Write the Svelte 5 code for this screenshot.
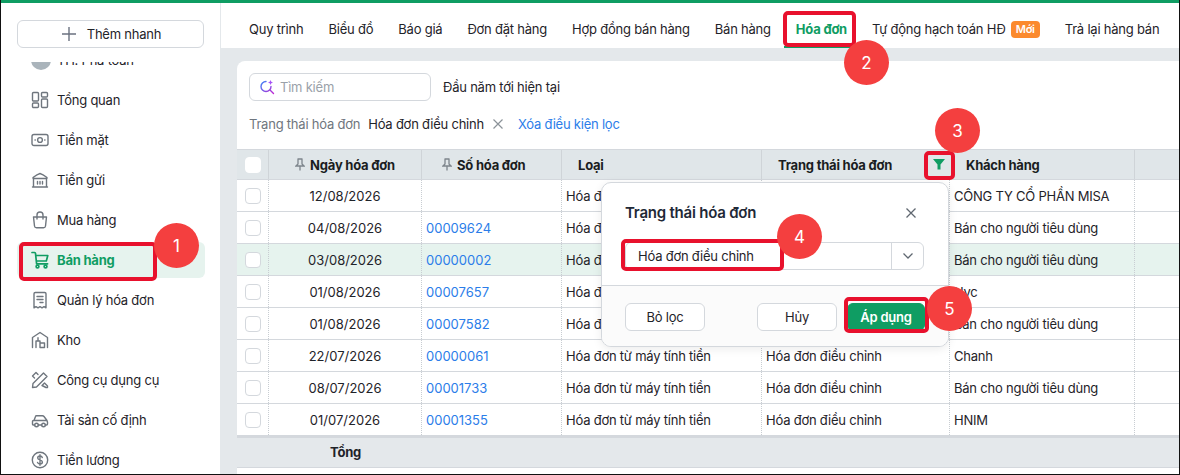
<script>
  const tabs = ['Quy trình', 'Biểu đồ', 'Báo giá', 'Đơn đặt hàng', 'Hợp đồng bán hàng', 'Bán hàng'];
  const nav = [
    { label: 'Tổng quan', icon: 'grid' },
    { label: 'Tiền mặt', icon: 'cash' },
    { label: 'Tiền gửi', icon: 'bank' },
    { label: 'Mua hàng', icon: 'bag' },
    { label: 'Bán hàng', icon: 'cart', active: true },
    { label: 'Quản lý hóa đơn', icon: 'receipt' },
    { label: 'Kho', icon: 'store' },
    { label: 'Công cụ dụng cụ', icon: 'tools' },
    { label: 'Tài sản cố định', icon: 'car' },
    { label: 'Tiền lương', icon: 'dollar' }
  ];
  const kind = 'Hóa đơn từ máy tính tiền';
  const st = 'Hóa đơn điều chỉnh';
  const rows = [
    { d: '12/08/2026', n: '', c: 'CÔNG TY CỔ PHẦN MISA' },
    { d: '04/08/2026', n: '00009624', c: 'Bán cho người tiêu dùng' },
    { d: '03/08/2026', n: '00000002', c: 'Bán cho người tiêu dùng', hl: true },
    { d: '01/08/2026', n: '00007657', c: 'Hvc' },
    { d: '01/08/2026', n: '00007582', c: 'Bán cho người tiêu dùng' },
    { d: '22/07/2026', n: '00000061', c: 'Chanh' },
    { d: '08/07/2026', n: '00001733', c: 'Bán cho người tiêu dùng' },
    { d: '01/07/2026', n: '00001355', c: 'HNIM' }
  ];
</script>

{#snippet pin()}
  <svg class="pin" width="10" height="13" viewBox="0 0 10 13" fill="none" stroke="#7d858c" stroke-width="1.3">
    <path d="M2.5 1h5M3 1v5L1 8h8L7 6V1M5 8v4.5" />
  </svg>
{/snippet}

{#snippet navIcon(name)}
  <svg class="nav-icon" width="18" height="18" viewBox="0 0 18 18" fill="none" stroke="currentColor" stroke-width="1.4" stroke-linejoin="round" stroke-linecap="round">
    {#if name === 'grid'}
      <rect x="1.500" y="1.500" width="6" height="8.500" rx="1" /><rect x="10.500" y="1.500" width="6" height="4.500" rx="1" /><rect x="1.500" y="12" width="6" height="4.500" rx="1" /><rect x="10.500" y="8" width="6" height="8.500" rx="1" />
    {:else if name === 'cash'}
      <rect x="1" y="3.500" width="16" height="11" rx="2" /><circle cx="9" cy="9" r="2.400" /><path d="M4 9h.3M13.700 9h.3" />
    {:else if name === 'bank'}
      <path d="M2 6.500C5 4.200 7 3 9 2.500c2 .5 4 1.700 7 4M2 7.500h14M2.500 8v7.500M15.500 8v7.500M1.500 16h15M6.500 10.500v2.500M9 10.500v2.500M11.500 10.500v2.500" />
    {:else if name === 'bag'}
      <path d="M2.500 6h13l-1 9a2 2 0 0 1-2 1.800h-7a2 2 0 0 1-2-1.800zM6 8V4a3 3 0 0 1 6 0v4" />
    {:else if name === 'cart'}
      <path d="M1 1.500h2.500a1 1 0 0 1 1 .9L5.600 12.800h11M4.800 4.500h12l-1.500 5.500H5.300" stroke-width="1.700" /><circle cx="6.500" cy="15.500" r="1.400" stroke-width="1.700" /><circle cx="14.500" cy="15.500" r="1.400" stroke-width="1.700" />
    {:else if name === 'receipt'}
      <path d="M3 2.800a1.300 1.300 0 0 1 1.300-1.300h9.400A1.300 1.300 0 0 1 15 2.800v14l-2-1.200-2 1.200-2-1.200-2 1.200-2-1.200-2 1.200zM6 5.500h6M6 8.500h6M9 11.500h3" />
    {:else if name === 'store'}
      <path d="M1.500 16.500V6.500L9 1.500l7.500 5v10M5 16.500v-6.500h4v6.500M9 16.500h4.500v-4.500H9M7 6.800v3" />
    {:else if name === 'tools'}
      <path d="M3.500 7 1.500 5 5 1.500 7 3.500M11 14.500l2.500-2.500 3 3v1.500H15zM12.500 2 16 5.500 5.500 16l-4 .5.500-4z" />
    {:else if name === 'car'}
      <path d="M3.700 14H2.500a1 1 0 0 1-1-1v-2.500a1 1 0 0 1 1-1h12.500a1.500 1.500 0 0 1 1.500 1.500v2a1 1 0 0 1-1 1h-1.200M7.300 14h3.400M3 9.500l1.500-4a1 1 0 0 1 1-.7h6a2 2 0 0 1 1.500.7l3 4" /><circle cx="5.500" cy="14" r="1.800" /><circle cx="12.500" cy="14" r="1.800" />
    {:else if name === 'dollar'}
      <circle cx="9" cy="9" r="7.700" /><path d="M11.300 6.500C11 5.500 10 5 9 5c-1.300 0-2.300.8-2.300 1.900 0 2.600 4.700 1.400 4.700 4.100 0 1.100-1 2-2.400 2-1.200 0-2.200-.6-2.500-1.600M9 3.800v10.400" />
    {/if}
  </svg>
{/snippet}

<div class="frame">
  <div class="topline"></div>
  <div class="shell">
    <aside class="sidebar">
      <button class="quick">
        <svg width="14" height="14" viewBox="0 0 14 14" stroke="#6b7280" stroke-width="1.400"><path d="M7 0v14M0 7h14" /></svg>
        Thêm nhanh
      </button>
      <div class="navclip">
        <div class="navscroll">
          <div class="item">
            <svg class="nav-icon avatar" width="20" height="20" viewBox="0 0 20 20"><circle cx="10" cy="10" r="10" fill="#aab4bb" /></svg>
            <span>TH. Phá toán</span>
          </div>
          {#each nav as n}
            <div class="item" class:active={n.active}>
              {@render navIcon(n.icon)}
              <span>{n.label}</span>
            </div>
          {/each}
        </div>
      </div>
    </aside>

    <main class="main">
      <nav class="tabs">
        {#each tabs as t}<span class="tab">{t}</span>{/each}
        <span class="tab current">Hóa đơn</span>
        <span class="tab withbadge">Tự động hạch toán HĐ <b class="badge">Mới</b></span>
        <span class="tab">Trả lại hàng bán</span>
        <span class="tab">Chứng từ</span>
      </nav>
      <section class="content">
        <div class="card">
          <div class="toolbar">
            <div class="search">
              <svg width="16" height="16" viewBox="0 0 16 16" fill="none" stroke-width="1.400" stroke-linecap="round">
                <defs><linearGradient id="sg" x1="0" y1="0" x2="1" y2="1"><stop offset="0" stop-color="#3b82f6" /><stop offset="1" stop-color="#c026d3" /></linearGradient></defs>
                <path d="M7 2.500a5 5 0 1 0 5 5M11 11l3.500 3.500" stroke="url(#sg)" />
                <path d="M11.500 1l.8 1.700 1.700.8-1.700.8-.8 1.700-.8-1.700L9 3.500l1.700-.8z" fill="#a855f7" />
              </svg>
              <span>Tìm kiếm</span>
            </div>
            <span class="period">Đầu năm tới hiện tại</span>
          </div>
          <div class="filters">
            <span class="flabel">Trạng thái hóa đơn</span>
            <span class="fvalue">Hóa đơn điều chỉnh</span>
            <svg class="fx" width="10" height="10" viewBox="0 0 10 10" stroke="#8b9299" stroke-width="1.200"><path d="M.5.500l9 9M9.500.500l-9 9" /></svg>
            <span class="fclear">Xóa điều kiện lọc</span>
          </div>
          <div class="table">
            <div class="row head">
              <div class="cell chk"><i class="box white"></i></div>
              <div class="cell date">{@render pin()}Ngày hóa đơn</div>
              <div class="cell num">{@render pin()}Số hóa đơn</div>
              <div class="cell kind">Loại</div>
              <div class="cell state">Trạng thái hóa đơn
                <svg class="funnel" width="12" height="12" viewBox="0 0 12 12"><path d="M0 1h12L7.500 6.500V11.500h-3V6.500z" fill="#0f9d63" /></svg>
              </div>
              <div class="cell cust">Khách hàng</div>
              <div class="cell rest"></div>
            </div>
            {#each rows as r}
              <div class="row" class:hl={r.hl}>
                <div class="cell chk"><i class="box"></i></div>
                <div class="cell date">{r.d}</div>
                <div class="cell num">{r.n}</div>
                <div class="cell kind">{kind}</div>
                <div class="cell state">{st}</div>
                <div class="cell cust">{r.c}</div>
                <div class="cell rest"></div>
              </div>
            {/each}
            <div class="total"><span>Tổng</span></div>
          </div>
        </div>
      </section>
    </main>
  </div>

  <div class="popup">
    <div class="popbody">
      <div class="poptitle">
        <span>Trạng thái hóa đơn</span>
        <svg width="10" height="10" viewBox="0 0 10 10" stroke="#5f6770" stroke-width="1.300"><path d="M.5.500l9 9M9.500.500l-9 9" /></svg>
      </div>
      <div class="select">
        <span>Hóa đơn điều chỉnh</span>
        <div class="caret"><svg width="10" height="6" viewBox="0 0 10 6" fill="none" stroke="#5f6770" stroke-width="1.300"><path d="M.5.500 5 5 9.500.500" /></svg></div>
      </div>
    </div>
    <div class="popfoot">
      <button class="btn">Bỏ lọc</button>
      <span class="spacer"></span>
      <button class="btn">Hủy</button>
      <button class="btn primary">Áp dụng</button>
    </div>
  </div>

  <i class="mark m1"></i><i class="mark m2"></i><i class="mark m3"></i><i class="mark m4"></i><i class="mark m5"></i>
  <b class="dot d1">1</b><b class="dot d2">2</b><b class="dot d3">3</b><b class="dot d4">4</b><b class="dot d5">5</b>
</div>

<style>
  :global(body) { margin: 0; background: #fff; }
  * { box-sizing: border-box; }
  .frame {
    position: relative; width: 1180px; height: 475px; overflow: hidden;
    border-left: 1px solid #111; border-right: 1px solid #111; border-bottom: 1px solid #111;
    font: 13px/18px Inter, "Noto Sans", sans-serif; letter-spacing: -0.22px; color: #1f2329; background: #fff;
  }
  .topline { height: 3px; background: #0f9d63; }
  .shell { display: flex; height: 471px; }

  .sidebar { width: 220px; flex: none; border-right: 1px solid #e4e8eb; padding: 17px 15px 0 16px; background: #fff; }
  .quick {
    display: flex; align-items: center; justify-content: center; gap: 11px; width: 187px; height: 28px;
    background: #fff; border: 1px solid #d4d8dd; border-radius: 6px; font: inherit; letter-spacing: inherit; color: #1f2329; padding: 0 0 0 2px;
  }
  .navclip { height: 412px; margin-top: 14px; overflow: hidden; }
  .navscroll { margin-top: -20px; }
  .item { display: flex; align-items: center; gap: 8px; height: 36px; margin-bottom: 4px; padding-left: 14px; border-radius: 6px; width: 188px; color: #1f2329; }
  .nav-icon { flex: none; color: #6f767e; }
  .avatar { margin-right: -2px; }
  .item.active { background: #e6f3ee; color: #0f9d63; font-weight: 700; }
  .item.active .nav-icon { color: #0f9d63; }

  .main { flex: 1; min-width: 0; display: flex; flex-direction: column; }
  .tabs { height: 45px; display: flex; align-items: center; padding: 7px 0 0 28px; gap: 25px; white-space: nowrap; overflow: hidden; flex: none; }
  .tab { position: relative; color: #1f2329; flex: none; }
  .tab.current { color: #0f9d63; font-weight: 700; }
  .tab.current::after { content: ''; position: absolute; left: -12px; right: -12px; bottom: -10px; height: 2px; background: #0f9d63; }
  .withbadge { display: inline-flex; align-items: center; gap: 5px; }
  .badge { background: #fb8a2e; color: #fff; font-size: 11px; line-height: 17px; font-weight: 600; padding: 0 5px; border-radius: 4px; }

  .content { flex: 1; background: #e4e8eb; padding: 13px 0 0 16px; }
  .card { background: #fff; border-radius: 8px 0 0 0; height: 413px; }
  .toolbar { display: flex; align-items: center; gap: 12px; padding: 12px 12px 0; }
  .search { display: flex; align-items: center; gap: 5px; width: 182px; height: 28px; border: 1px solid #d4d8dd; border-radius: 6px; padding-left: 9px; color: #9aa1a9; }
  .period { color: #1f2329; }
  .filters { display: flex; align-items: center; height: 18px; margin: 14px 12px 16px; }
  .flabel { color: #6f767e; margin-right: 8px; }
  .fx { margin: 0 15px 0 9px; }
  .fclear { color: #2b7de9; }

  .table { display: flex; flex-direction: column; }
  .row { display: flex; height: 32px; border-bottom: 1px solid #d4d8dd; align-items: stretch; background: #fff; }
  .row.hl { background: #e6f3ee; }
  .row.head { height: 31px; background: #e0e6e9; border-top: 1px solid #d4d8dd; font-weight: 700; color: #1a1d21; }
  .cell { display: flex; align-items: center; padding-left: 4px; border-right: 1px dotted #c8cdd2; white-space: nowrap; position: relative; }
  .row:not(.head) .date, .row:not(.head) .num { letter-spacing: 0; }
  .head .cell { border-right: 1px solid #cfd4d8; }
  .chk { width: 32px; padding: 0; justify-content: center; }
  .date { width: 153px; justify-content: center; padding: 0; }
  .num { width: 140px; color: #2b7de9; }
  .kind { width: 200px; }
  .state { width: 188px; }
  .cust { width: 185px; }
  .rest { flex: 1; border-right: 0; }
  .head .rest { border-right: 0; }
  .head .date { padding-left: 0; gap: 5px; }
  .head .num { color: #1a1d21; padding-left: 20px; gap: 5px; }
  .head .kind { padding-left: 16px; }
  .head .state { padding-left: 16px; border-right: 0; }
  .head .cust { padding-left: 16px; }
  .funnel { position: absolute; left: 171px; top: 8px; }
  .box { display: block; width: 16px; height: 16px; border: 1px solid #d4d8dd; border-radius: 4px; background: #fff; }
  .box.white { border-color: #fff; }
  .total { height: 32px; background: #e4e8eb; border-top: 2px solid #d4d8dd; border-bottom: 1px solid #d4d8dd; font-weight: 700; padding: 0 0 2px 93px; display: flex; align-items: center; }

  .popup {
    position: absolute; left: 600px; top: 182px; width: 348px; height: 165px;
    background: #fff; border: 1px solid #d4d8dd; border-radius: 10px; overflow: hidden;
    box-shadow: 0 2px 10px rgba(0, 0, 0, .08); display: flex; flex-direction: column;
  }
  .popbody { padding: 20px 24px 0 23px; height: 103px; border-bottom: 1px solid #d4d8dd; }
  .poptitle { display: flex; justify-content: space-between; align-items: center; font-size: 15px; font-weight: 600; color: #1f2937; padding-right: 8px; height: 20px; }
  .select { display: flex; align-items: center; justify-content: space-between; height: 28px; margin-top: 19px; border: 1px solid #d4d8dd; border-radius: 6px; padding-left: 12px; }
  .caret { width: 32px; height: 100%; border-left: 1px solid #d4d8dd; display: flex; align-items: center; justify-content: center; }
  .popfoot { flex: 1; background: #fbfbfb; display: flex; align-items: center; padding: 2px 23px 0; gap: 10px; }
  .spacer { flex: 1; }
  .btn { width: 80px; height: 28px; background: #fff; border: 1px solid #d4d8dd; border-radius: 6px; font: inherit; letter-spacing: inherit; color: #1f2329; padding: 0; }
  .btn.primary { width: 78px; background: #0f9d63; border-color: #0f9d63; color: #fff; font-weight: 600; }

  .mark { position: absolute; border: 4px solid #e8112d; border-radius: 5px; pointer-events: none; }
  .m1 { left: 18px; top: 242px; width: 138px; height: 39px; }
  .m2 { left: 782px; top: 11px; width: 73px; height: 36px; }
  .m3 { left: 923px; top: 151px; width: 31px; height: 29px; }
  .m4 { left: 620px; top: 239px; width: 163px; height: 32px; }
  .m5 { left: 843px; top: 297px; width: 85px; height: 36px; }
  .dot {
    position: absolute; width: 45px; height: 45px; border-radius: 50%; background: #f43f3f; color: #fff;
    display: flex; align-items: center; justify-content: center; font-size: 17px; font-weight: 400; letter-spacing: 0;
  }
  .d1 { left: 153px; top: 223px; }
  .d2 { left: 843px; top: 40px; }
  .d3 { left: 934px; top: 108px; }
  .d4 { left: 776px; top: 214px; }
  .d5 { left: 926px; top: 286px; }
</style>
